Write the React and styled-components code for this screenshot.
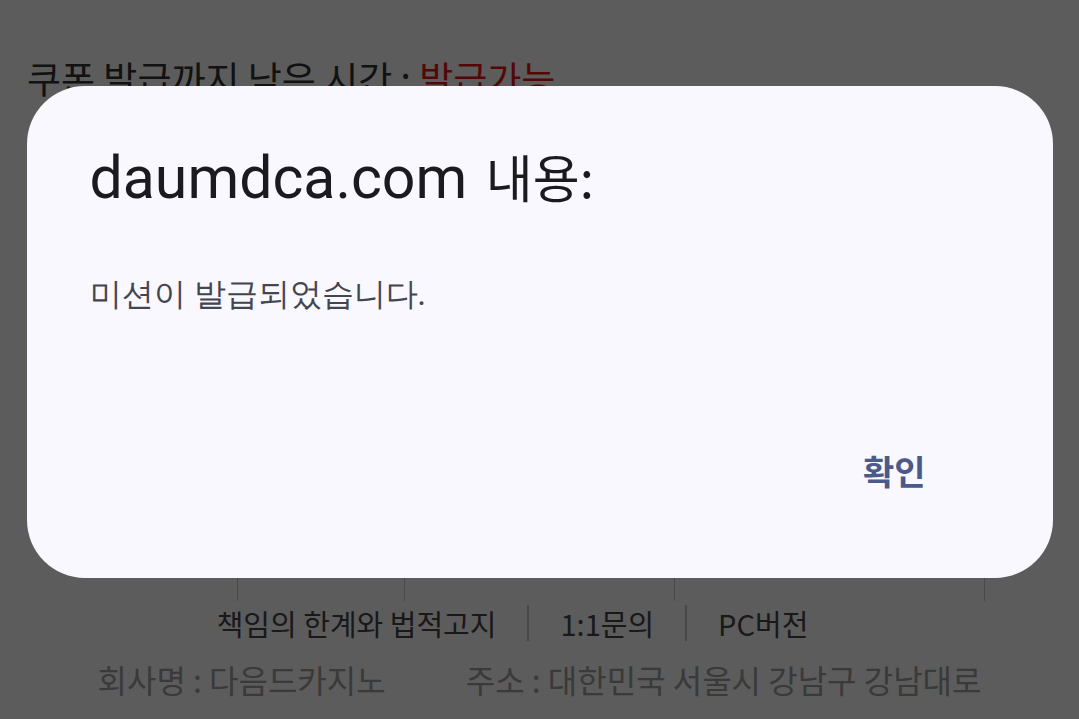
import React from 'react'
import styled, { createGlobalStyle } from 'styled-components'

const GlobalStyle = createGlobalStyle`
  html, body {
    margin: 0;
    padding: 0;
    background: #ffffff;
    overflow: hidden;
  }
  * { box-sizing: border-box; }
`

const Page = styled.div`
  width: 1079px;
  height: 719px;
  display: flex;
  flex-direction: column;
  font-family: 'Noto Sans CJK KR', 'Noto Sans', sans-serif;
  background: #ffffff;
`

const Countdown = styled.div`
  padding: 52px 0 0 27px;
  font-size: 37px;
  line-height: 52px;
  color: #333333;
  white-space: nowrap;

  span{
    color: #e81616;
  }
`

const Body = styled.div`
  flex: 1;
  display: flex;
  flex-direction: column;
  justify-content: flex-end;
`

const TableRow = styled.div`
  display: flex;
  height: 24px;
  margin: 0 94px 0 237px;
  border-top: 1px solid #cccccc;
`

const Cell = styled.div`
  flex: ${p => p.grow};
  border-left: 1px solid #cccccc;
  &:last-child{ border-right: 1px solid #cccccc; }
`

const Footer = styled.div`
  display: flex;
  flex-direction: column;
  align-items: center;
  padding-bottom: 18px;
`

const Links = styled.div`
  display: flex;
  align-items: center;
  gap: 31px;
  margin-right: 54px;
  font-size: 29px;
  line-height: 44px;
  color: #474747;
`

const Divider = styled.i`
  width: 2px;
  height: 36px;
  background: #c8c8c8;
`

const Company = styled.div`
  display: flex;
  gap: 80px;
  margin-top: 12px;
  font-size: 32px;
  line-height: 44px;
  color: #a0a0a0;
`

const Overlay = styled.div`
  position: fixed;
  inset: 0;
  background: rgba(0, 0, 0, 0.64);
  display: flex;
  justify-content: center;
  align-items: flex-start;
  padding-top: 86px;
`

const Dialog = styled.div`
  width: 1026px;
  height: 492px;
  border-radius: 58px;
  background: #f8f8fe;
  display: flex;
  flex-direction: column;
  padding: 56px 127px 87px 63px;
`

const Title = styled.h1`
  margin: 0;
  font-family: Roboto, 'Noto Sans CJK KR', sans-serif;
  font-weight: 400;
  font-size: 59px;
  line-height: 68px;
  color: #1b1b1f;
  white-space: nowrap;

  span{
    font-family: 'Noto Sans CJK KR', sans-serif;
    font-size: 51px;
    margin-left: 4px;
  }
`

const Message = styled.p`
  margin: 62px 0 0;
  font-size: 32px;
  line-height: 40px;
  color: #44464f;
`

const Actions = styled.div`
  margin-top: auto;
  display: flex;
  justify-content: flex-end;
`

const ConfirmButton = styled.button`
  border: 0;
  padding: 0;
  background: none;
  font-family: 'Noto Sans CJK KR', sans-serif;
  font-weight: 700;
  font-size: 34px;
  line-height: 40px;
  color: #4b5a8a;
  cursor: pointer;
`

const App = () => {
  return (
    <>
      <GlobalStyle />
      <Page>
        <Countdown>쿠폰 발급까지 남은 시간 : <span>발급가능</span></Countdown>
        <Body>
          <TableRow>
            <Cell grow={167} />
            <Cell grow={270} />
            <Cell grow={311} />
          </TableRow>
          <Footer>
            <Links>
              <span>책임의 한계와 법적고지</span>
              <Divider />
              <span>1:1문의</span>
              <Divider />
              <span>PC버전</span>
            </Links>
            <Company>
              <span>회사명 : 다음드카지노</span>
              <span>주소 : 대한민국 서울시 강남구 강남대로</span>
            </Company>
          </Footer>
        </Body>
      </Page>
      <Overlay>
        <Dialog>
          <Title>daumdca.com <span>내용:</span></Title>
          <Message>미션이 발급되었습니다.</Message>
          <Actions>
            <ConfirmButton>확인</ConfirmButton>
          </Actions>
        </Dialog>
      </Overlay>
    </>
  )
}

export default App
